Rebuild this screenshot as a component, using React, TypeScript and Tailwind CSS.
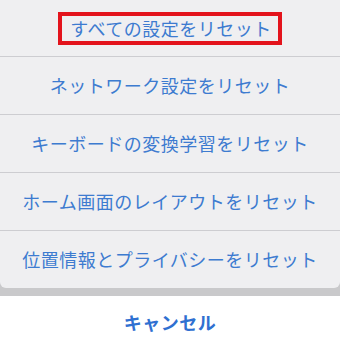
import React from 'react';

const rows = [
  'ネットワーク設定をリセット',
  'キーボードの変換学習をリセット',
  'ホーム画面のレイアウトをリセット',
  '位置情報とプライバシーをリセット',
];

export default function App() {
  return (
    <div
      className="w-[340px] h-[350px] bg-[#c9c9cb] flex flex-col overflow-hidden"
      style={{ fontFamily: '"Noto Sans CJK JP", "Noto Sans", sans-serif' }}
    >
      <div className="bg-[#efeff1] rounded-b-[6px] flex flex-col">
        {/* first row with highlight box */}
        <div className="h-[57px] flex items-center justify-center border-b border-[#cdcdd1]">
          <span className="border-4 border-[#e3131c] pl-[8px] pr-[6px] h-[33px] flex items-center text-[18px] tracking-[0.5px] text-[#3d7bd0]">
            すべての設定をリセット
          </span>
        </div>
        {rows.map((t, i) => (
          <div
            key={t}
            className={
              i < rows.length - 1
                ? 'h-[58px] flex items-center justify-center border-b border-[#cdcdd1] text-[18px] tracking-[0.5px] text-[#3d7bd0]'
                : 'h-[57px] flex items-center justify-center text-[18px] tracking-[0.5px] text-[#3d7bd0]'
            }
          >
            {t}
          </div>
        ))}
      </div>
      <div className="h-[8px] shrink-0" />
      <div className="flex-1 bg-white flex items-start justify-center pt-[13px]">
        <span className="text-[18px] font-bold tracking-[0.5px] text-[#2f70d1]">キャンセル</span>
      </div>
    </div>
  );
}
